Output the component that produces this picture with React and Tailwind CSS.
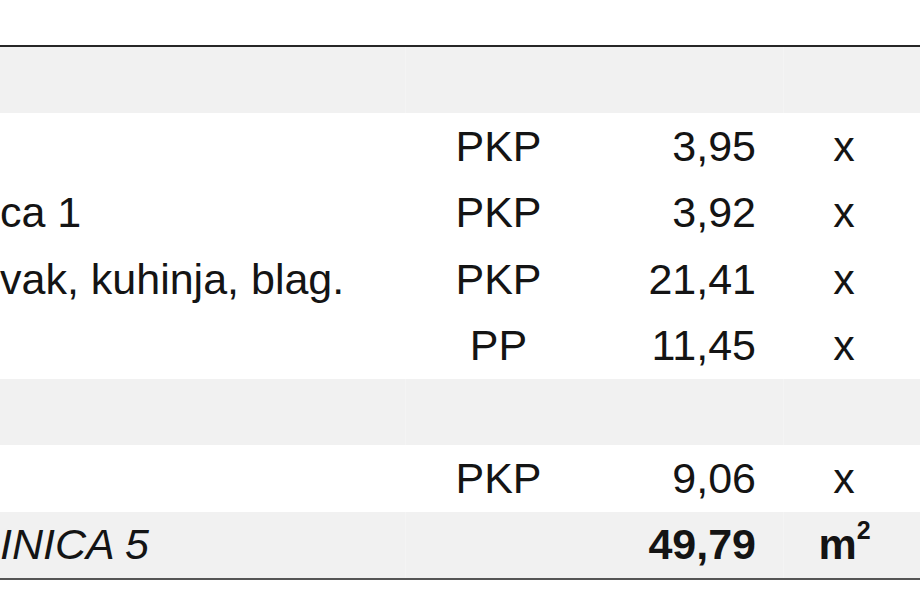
import React from 'react'

const ROWS = [
  { shade: true },
  { name: '', code: 'PKP', area: '3,95', unit: 'x' },
  { name: 'ca 1', code: 'PKP', area: '3,92', unit: 'x' },
  { name: 'vak, kuhinja, blag.', code: 'PKP', area: '21,41', unit: 'x' },
  { name: '', code: 'PP', area: '11,45', unit: 'x' },
  { shade: true },
  { name: '', code: 'PKP', area: '9,06', unit: 'x' },
  { shade: true, total: true, name: 'INICA 5', area: '49,79' },
]

function Row({ row }) {
  const bg = row.shade ? 'bg-[#f1f1f1]' : 'bg-white'
  const cell = 'flex items-center pb-[1px] h-full'
  return (
    <div className={`grid grid-cols-[405px_187px_191px_122px_1fr] h-[66.375px] ${bg}`}>
      <div className={`${cell} whitespace-nowrap ${row.total ? 'italic' : ''}`}>
        {row.name}
      </div>
      <div className={`${cell} justify-center ${row.shade ? 'border-l border-[#f4f4f4]' : ''}`}>
        {row.code}
      </div>
      <div className={`${cell} justify-end pr-[27px] ${row.total ? 'font-bold' : ''}`}>
        {row.area}
      </div>
      <div className={`${cell} justify-center ${row.shade ? 'border-l border-[#f4f4f4]' : ''}`}>
        {row.total ? (
          <span className="font-bold">
            m<sup className="text-[25px] relative -top-[20px] align-baseline">2</sup>
          </span>
        ) : (
          row.unit
        )}
      </div>
      <div />
    </div>
  )
}

export default function App() {
  return (
    <div
      className="w-[920px] h-[612px] bg-white overflow-hidden text-[43px] text-[#141414]"
      style={{ fontFamily: '"Liberation Sans", Arial, sans-serif' }}
    >
      <div className="h-[45px]" />
      <div className="border-t-2 border-b-2 border-t-[#262626] border-b-[#555555]">
        {ROWS.map((r, i) => (
          <Row key={i} row={r} />
        ))}
      </div>
    </div>
  )
}
